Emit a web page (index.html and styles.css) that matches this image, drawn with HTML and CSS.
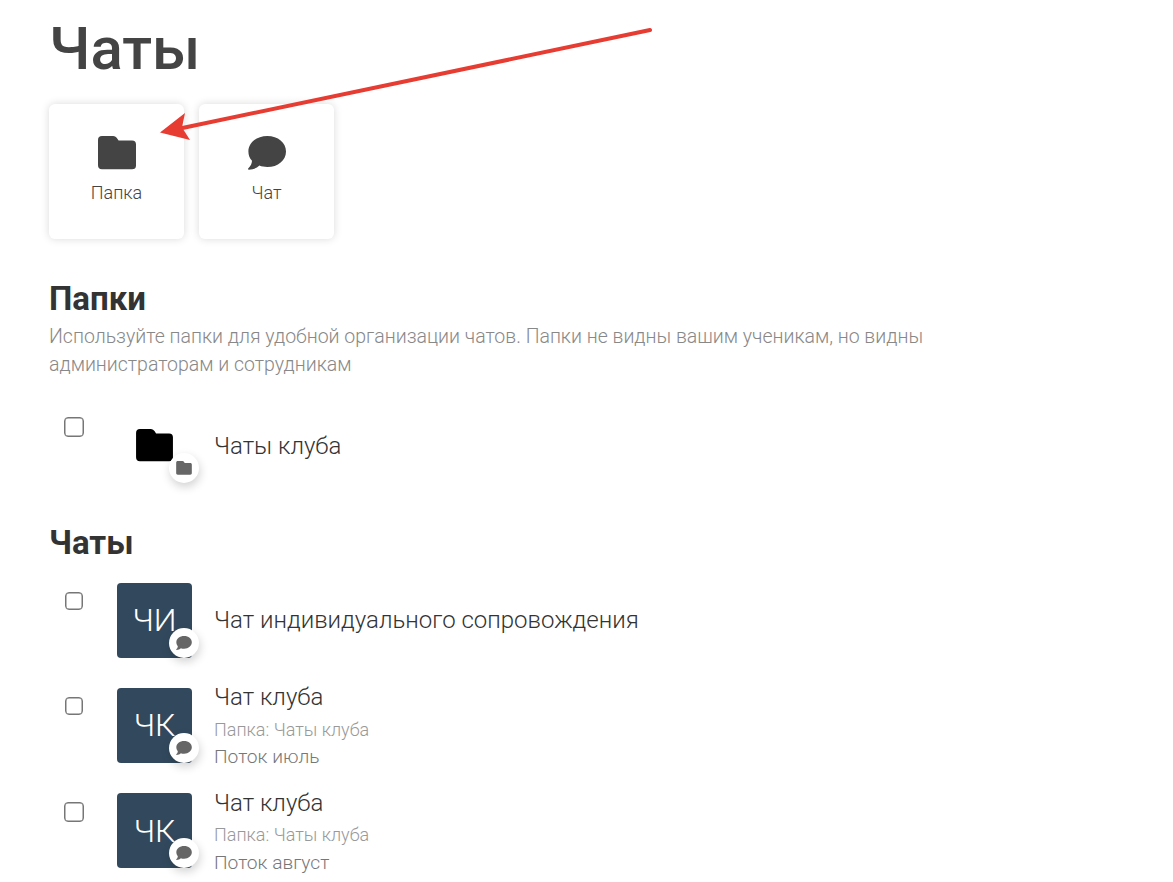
FILE: index.html
```
<!DOCTYPE html>
<html lang="ru">
<head>
  <meta charset="UTF-8">
  <title>Чаты</title>
  <link rel="stylesheet" href="styles.css">
</head>
<body>

  <svg class="sprite" aria-hidden="true">
    <symbol id="folder" viewBox="0 0 38 34">
      <path d="M4 0H15C17 0 18.3 1 19.2 2.4L20.6 4.6H34C36.8 4.6 38 6.2 38 8.6V29.4C38 32 36.6 33.2 34 33.2H4C1.4 33.2 0 31.8 0 29.2V4C0 1.4 1.4 0 4 0Z"/>
    </symbol>
    <symbol id="bubble" viewBox="0 0 38 34">
      <path d="M19.3 0C30 0 38 6.6 38 15.4S30 31 19.3 31C16.2 31 13.7 30.6 11.4 29.6C8.7 32.2 5.2 33.6 .8 33.7C0 33.7-.2 32.9.4 32.3C2.7 30 3.9 27.5 4 24.7C1.5 22.1.4 18.9.4 15.4C.4 6.6 8.6 0 19.3 0Z"/>
    </symbol>
  </svg>

  <h1>Чаты</h1>

  <div class="actions">
    <a class="action"><svg class="action-icon"><use href="#folder"/></svg><span>Папка</span></a>
    <a class="action"><svg class="action-icon"><use href="#bubble"/></svg><span>Чат</span></a>
  </div>

  <h2>Папки</h2>
  <p class="hint">Используйте папки для удобной организации чатов. Папки не видны вашим ученикам, но видны администраторам и сотрудникам</p>

  <div class="list folders">
    <div class="item">
      <input type="checkbox" class="check check-big">
      <div class="avatar avatar-folder">
        <svg class="avatar-icon"><use href="#folder"/></svg>
        <div class="badge"><svg><use href="#folder"/></svg></div>
      </div>
      <div class="info"><div class="name">Чаты клуба</div></div>
    </div>
  </div>

  <h2>Чаты</h2>

  <div class="list chats">
    <div class="item">
      <input type="checkbox" class="check">
      <div class="avatar">ЧИ
        <div class="badge"><svg><use href="#bubble"/></svg></div>
      </div>
      <div class="info"><div class="name">Чат индивидуального сопровождения</div></div>
    </div>
    <div class="item">
      <input type="checkbox" class="check">
      <div class="avatar">ЧК
        <div class="badge"><svg><use href="#bubble"/></svg></div>
      </div>
      <div class="info">
        <div class="name">Чат клуба</div>
        <div class="folder">Папка: Чаты клуба</div>
        <div class="about">Поток июль</div>
      </div>
    </div>
    <div class="item">
      <input type="checkbox" class="check check-big">
      <div class="avatar">ЧК
        <div class="badge"><svg><use href="#bubble"/></svg></div>
      </div>
      <div class="info">
        <div class="name">Чат клуба</div>
        <div class="folder">Папка: Чаты клуба</div>
        <div class="about">Поток август</div>
      </div>
    </div>
  </div>

  <svg class="arrow" viewBox="0 0 500 120">
    <path class="arrow-line" d="M490 10L20 108.5"/>
    <path class="arrow-head" d="M0 112.5L25 93L22 107.5L30 120Z"/>
  </svg>

</body>
</html>
```
FILE: styles.css
```
body {
  margin: 0;
  padding: 14px 49px 0;
  height: 882px;
  box-sizing: border-box;
  overflow: hidden;
  background: #fff;
  color: #333;
  font-family: Roboto, sans-serif;
  font-weight: 300;
}

.sprite {
  display: none;
}

h1 {
  margin: 0;
  font-size: 60px;
  line-height: 70px;
  font-weight: 500;
  color: #444;
}

h2 {
  margin: 0;
  font-size: 33px;
  line-height: 40px;
  font-weight: 700;
}

.actions {
  display: flex;
  gap: 15px;
  margin: 20px 0 40px;
}

.action {
  width: 135px;
  height: 135px;
  box-sizing: border-box;
  padding-top: 32px;
  display: flex;
  flex-direction: column;
  align-items: center;
  border-radius: 6px;
  box-shadow: 0 0 9px rgba(0, 0, 0, 0.15);
  font-size: 18px;
  line-height: 24px;
  color: #444;
}

.action-icon {
  width: 38px;
  height: 34px;
  margin-bottom: 11px;
  fill: #444;
}

.hint {
  margin: 4px 0 0;
  width: 900px;
  font-size: 19.5px;
  line-height: 28px;
  color: #888;
}

.list {
  display: flex;
  flex-direction: column;
  gap: 30.2px;
}

.folders { margin: 29px 0 40px; }
.chats   { margin-top: 20px; }

.item {
  display: grid;
  grid-template-columns: 50px 75px 1fr;
  grid-template-rows: 75px;
  column-gap: 18px;
}

.check {
  appearance: none;
  width: 18px;
  height: 18px;
  margin: 9px 0 0 16px;
  border: 1px solid #767676;
  border-radius: 4px;
  background: #fff;
  box-shadow: inset 0 0 0 0.5px #767676;
}

.check-big {
  width: 20px;
  height: 20px;
  margin-left: 15px;
}

.avatar {
  position: relative;
  display: flex;
  align-items: center;
  justify-content: center;
  padding-bottom: 0.6px;
  border-radius: 4px;
  background: #32495d;
  color: #fff;
  font-size: 32px;
}

.avatar-folder {
  padding-bottom: 0;
  background: none;
}

.avatar-icon {
  width: 37px;
  height: 33px;
  fill: #000;
}

.badge {
  position: absolute;
  right: -7px;
  bottom: 0;
  width: 30px;
  height: 30px;
  display: flex;
  align-items: center;
  justify-content: center;
  border-radius: 50%;
  background: #fff;
  box-shadow: 1px 4px 10px rgba(0, 0, 0, 0.18);
}

.badge svg {
  width: 16px;
  height: 14px;
  fill: #666;
}

.info {
  display: flex;
  flex-direction: column;
  justify-content: center;
  padding: 0 0 0.7px 4px;
}

.name {
  margin-bottom: 1.8px;
  font-size: 24px;
  line-height: 34px;
}

.name:only-child {
  margin-bottom: 0.8px;
}

.folders .name:only-child {
  margin: 1px 0 0;
}

.folder {
  font-size: 18px;
  line-height: 27.2px;
  color: #999;
}

.about {
  font-size: 19.2px;
  line-height: 27px;
  color: #777;
}

/* pointer drawn over the page */
.arrow {
  position: absolute;
  left: 160px;
  top: 20px;
  width: 500px;
  height: 120px;
}

.arrow-line {
  fill: none;
  stroke: #e63c32;
  stroke-width: 4;
  stroke-linecap: round;
}

.arrow-head {
  fill: #e63c32;
}
```
